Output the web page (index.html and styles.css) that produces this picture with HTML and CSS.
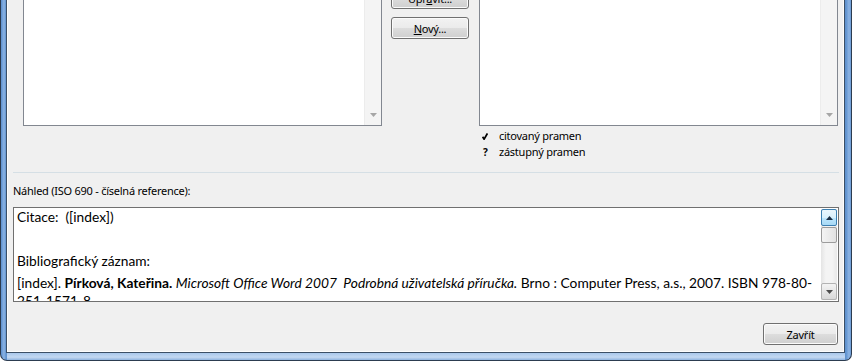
FILE: index.html
```html
<!doctype html>
<html>
<head>
<meta charset="utf-8">
<title>Správce pramenů</title>
<link rel="stylesheet" href="styles.css">
</head>

<body>
	<div class="frame">
		<div class="dialog">

			<div class="top">
				<div class="list">
					<div class="vscroll">
						<svg class="arrow" width="7" height="4" viewBox="0 0 7 4"><path d="M0 0H7L3.5 4Z" fill="#a6a6a6"/></svg>
					</div>
				</div>

				<div class="actions">
					<button class="btn">Upr<u>a</u>vit...</button>
					<button class="btn"><u>N</u>ový...</button>
				</div>

				<div class="side">
					<div class="list">
						<div class="vscroll">
							<svg class="arrow" width="7" height="4" viewBox="0 0 7 4"><path d="M0 0H7L3.5 4Z" fill="#a6a6a6"/></svg>
						</div>
					</div>
					<ul class="legend">
						<li><span class="mark"><svg width="6" height="7" viewBox="0 0 6 7"><path d="M0.6 3.8L2.1 6.2L5.4 0.5" stroke="#000" stroke-width="1.7" fill="none"/></svg></span>citovaný pramen</li>
						<li><span class="mark mark-q">?</span>zástupný pramen</li>
					</ul>
				</div>
			</div>

			<hr class="sep">

			<div class="label">Náhled (ISO 690 - číselná reference):</div>

			<div class="preview">
				<div class="preview-text">
					<p>Citace:&nbsp; ([index])</p>
					<p>&nbsp;</p>
					<p>Bibliografický záznam:</p>
					<p>[index]. <b>Pírková, Kateřina.</b> <i>Microsoft Office Word 2007&nbsp; Podrobná uživatelská příručka.</i> Brno : Computer Press, a.s., 2007. ISBN 978-80-251-1571-8.</p>
				</div>
				<div class="scroll">
					<div class="sb-btn sb-up">
						<svg width="7" height="4" viewBox="0 0 7 4"><path d="M0 4H7L3.5 0Z" fill="#1c2f45"/></svg>
					</div>
					<div class="sb-thumb"></div>
					<div class="sb-track"></div>
					<div class="sb-btn">
						<svg width="7" height="4" viewBox="0 0 7 4"><path d="M0 0H7L3.5 4Z" fill="#4d4d4d"/></svg>
					</div>
				</div>
			</div>

			<div class="footer">
				<button class="btn btn-close">Zavřít</button>
			</div>

		</div>
	</div>
</body>
</html>
```

FILE: styles.css
```css
body {
	margin: 0;
	font-family: "Noto Sans", sans-serif;
	font-size: 11px;
	letter-spacing: -0.25px;
	color: #000;
}

.frame {
	width: 852px;
	height: 361px;
	box-sizing: border-box;
	border: 1px solid #2c3c50;
	border-top: none;
	border-radius: 0 0 7px 7px;
	padding: 0 6px 7px 5px;
	background: linear-gradient(to right, #5b8fcf 0px, #8db4e3 3px, #5f92cf 5px, #5f92cf 845px, #8db4e3 848px, #5b8fcf 851px);
	position: relative;
}

.frame::after {
	content: "";
	position: absolute;
	left: 6px;
	right: 6px;
	bottom: 0;
	height: 7px;
	background: linear-gradient(to bottom, #a9c8ec, #c3d8f1 60%, #8fb3df);
}

.dialog {
	height: 100%;
	box-sizing: border-box;
	border: 1px solid #3b4f66;
	border-top: none;
	background: #f0f0f0;
	box-shadow: inset 1px 0 #fdfdfd, inset -1px 0 #fdfdfd, inset 0 -1px #fdfdfd;
	padding: 0 5px 0 6px;
	overflow: hidden;
	display: flex;
	flex-direction: column;
	position: relative;
	z-index: 1;
}

/* lists and buttons (top part is cut by the window edge) */
.top {
	display: flex;
	align-items: flex-start;
	margin-top: -100px;
	padding-left: 10px;
}

.list {
	width: 359px;
	height: 226px;
	box-sizing: border-box;
	border: 1px solid #828790;
	background: #fff;
	display: flex;
	justify-content: flex-end;
}

.vscroll {
	width: 17px;
	background: #f4f4f4;
	border-left: 1px solid #ececec;
	display: flex;
	align-items: flex-end;
	justify-content: center;
	padding-bottom: 8px;
	box-sizing: border-box;
}

.actions {
	width: 78px;
	margin: 0 10px 0 9px;
	padding-top: 87px;
	display: flex;
	flex-direction: column;
	gap: 8px;
}

.btn {
	height: 22px;
	box-sizing: border-box;
	border: 1px solid #707070;
	border-radius: 3px;
	background: linear-gradient(to bottom, #f2f2f2 0%, #ebebeb 50%, #dddddd 50%, #cfcfcf 100%);
	box-shadow: inset 0 0 0 1px #fbfbfb;
	font-family: inherit;
	font-size: 11px;
	letter-spacing: inherit;
	color: #000;
	padding: 0;
}

.side {
	width: 359px;
}

.legend {
	list-style: none;
	margin: 2px 0 0;
	padding: 0 0 0 3px;
	line-height: 16px;
}

.mark {
	display: inline-block;
	width: 17px;
}

.mark-q {
	font-weight: bold;
	font-size: 10px;
	padding-left: 1px;
	box-sizing: border-box;
}

.sep {
	border: 0;
	border-top: 1px solid #d5dfe5;
	height: 0;
	margin: 12px 0 0;
}

.label {
	margin-top: 10px;
	line-height: 15px;
}

/* preview box */
.preview {
	margin-top: 9px;
	height: 95px;
	box-sizing: border-box;
	border: 1px solid #707070;
	background: #fff;
	display: flex;
}

.preview-text {
	flex: 1;
	overflow: hidden;
	padding: 0 3px;
	font-family: Lato, "Liberation Sans", sans-serif;
	font-size: 13.75px;
	letter-spacing: 0;
}

.preview-text p {
	margin: 0 0 4px;
	line-height: 18px;
}

.scroll {
	width: 16px;
	margin: 1px 1px 1px 0;
	display: flex;
	flex-direction: column;
	background: linear-gradient(to right, #e4e4e4, #f4f4f4 30%, #f4f4f4 70%, #e8e8e8);
}

.sb-btn {
	height: 17px;
	box-sizing: border-box;
	border: 1px solid #b3b3b3;
	border-radius: 2px;
	background: linear-gradient(to bottom, #f4f4f4, #e6e6e6 50%, #d9d9d9);
	display: flex;
	align-items: center;
	justify-content: center;
}

.sb-up {
	border-color: #3c7fb1;
	background: linear-gradient(to bottom, #eaf6fd, #d9f0fc 50%, #bee6fd 50%, #a7d9f5);
}

.sb-thumb {
	height: 16px;
	box-sizing: border-box;
	border: 1px solid #9c9c9c;
	border-radius: 2px;
	background: linear-gradient(to right, #f4f4f4, #e2e2e2);
	margin-top: 1px;
}

.sb-track {
	flex: 1;
}

.footer {
	margin-top: 21px;
	display: flex;
	justify-content: flex-end;
	padding-right: 1px;
}

.btn-close {
	width: 75px;
}
```
